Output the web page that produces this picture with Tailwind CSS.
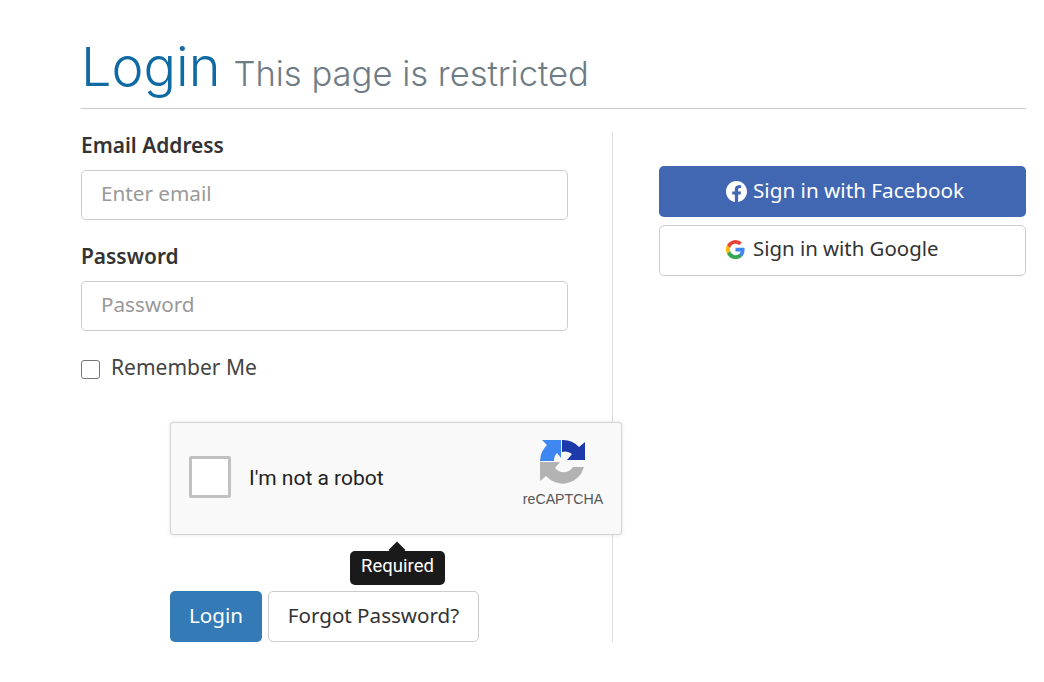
<!DOCTYPE html>
<html lang="en">
<head>
    <meta charset="UTF-8">
    <meta name="viewport" content="width=device-width, initial-scale=1.0">
    <title>Login</title>
    <script src="https://cdn.jsdelivr.net/npm/@tailwindcss/browser@4"></script>
</head>
<body class="bg-white h-[682px] overflow-hidden font-['Noto_Sans',sans-serif] text-[#333]">
    <div class="ml-[81px] w-[945px]">
        <div class="h-[109px] border-b border-[#ccc] flex items-baseline pt-[31px]">
            <h1 class="font-['Inter',sans-serif] font-light text-[54px] leading-[72px] text-[#0f6aa3]">Login</h1>
            <span class="font-['Inter',sans-serif] font-light text-[34.6px] ml-[13px] text-[#6f7b85]">This page is restricted</span>
        </div>
        <div class="flex mt-[23px]">
            <div class="w-[532px] h-[510px] border-r border-[#ddd] shrink-0">
                <label class="block font-semibold text-[20.9px] leading-[28px] mt-[-1px]">Email Address</label>
                <div class="mt-[11px] w-[487px] h-[50px] border border-[#ccc] rounded-[5px] px-[19px] pb-[2px] flex items-center text-[20.7px] text-[#999]">Enter email</div>
                <label class="block font-semibold text-[20.9px] leading-[28px] mt-[22px]">Password</label>
                <div class="mt-[11px] w-[487px] h-[50px] border border-[#ccc] rounded-[5px] px-[19px] pb-[2px] flex items-center text-[20.7px] text-[#999]">Password</div>
                <div class="flex items-center mt-[23px] h-[28px] text-[21px] text-[#444]">
                    <span class="w-[19px] h-[19px] border border-[#767676] rounded-[3px] mt-[2px]"></span>
                    <span class="ml-[11px]">Remember Me</span>
                </div>
                <div class="relative ml-[89px] mt-[40px] w-[452px] h-[113px] bg-[#f9f9f9] border border-[#d3d3d3] rounded-[3px] shadow-[0_0_4px_rgba(0,0,0,0.1)] flex items-center">
                    <span class="ml-[18px] w-[42px] h-[42px] bg-white border-[3px] border-[#c1c1c1] rounded-[2px] mt-[-3px]"></span>
                    <span class="ml-[18px] font-['Roboto',sans-serif] text-[21px] text-[#222]">I'm not a robot</span>
                    <div class="absolute left-[349px] top-[16px] w-[86px] flex flex-col items-center">
                        <svg width="46" height="46" viewBox="0 0 46 46">
                            <path d="M22 1 A22 22 0 0 1 39 8 L45 3 V21 H27 L32 15 A11 11 0 0 0 22 13 Z" fill="#1c3aa9"/>
                            <path d="M0 22 A23 23 0 0 1 7 6 L2 1 H21 V19 L17 14 A11 11 0 0 0 14 22 Z" fill="#3f87f0"/>
                            <path d="M0 23 V42 L6 37 A22 22 0 0 0 44 28 H33 A11 11 0 0 1 15 29 L20 23 Z" fill="#b3b3b3"/>
                        </svg>
                        <span class="font-['Liberation_Sans',sans-serif] text-[14.2px] leading-[16px] mt-[6px] text-[#555]">reCAPTCHA</span>
                    </div>
                    <div class="absolute left-[179px] top-[128px] w-[95px] h-[34px] bg-[#1a1a1a] rounded-[5px] pb-[2px] flex items-center justify-center font-['Roboto',sans-serif] text-[18.5px] text-white">Required</div>
                    <div class="absolute left-[220px] top-[121px] w-[12px] h-[12px] bg-[#1a1a1a] rotate-45"></div>
                </div>
                <div class="flex ml-[89px] mt-[56px] gap-[6px]">
                    <div class="w-[92px] h-[51px] bg-[#337ab7] rounded-[5px] pb-[3px] text-white text-[20.6px] flex items-center justify-center">Login</div>
                    <div class="w-[211px] h-[51px] border border-[#ccc] rounded-[5px] pb-[3px] text-[20.6px] flex items-center justify-center">Forgot Password?</div>
                </div>
            </div>
            <div class="ml-[46px] w-[367px] mt-[34px] flex flex-col gap-[8px]">
                <div class="h-[51px] bg-[#4267b2] rounded-[5px] pb-[2px] text-white text-[20.7px] flex items-center pl-[67px] gap-[6px]">
                    <svg class="mt-[1px]" width="21" height="21" viewBox="0 0 24 24" fill="#fff"><path d="M24 12.07C24 5.4 18.63 0 12 0S0 5.4 0 12.07c0 6.03 4.39 11.02 10.13 11.93v-8.44H7.08v-3.49h3.05V9.41c0-3.02 1.79-4.69 4.53-4.69 1.31 0 2.69.24 2.69.24v2.97h-1.51c-1.49 0-1.96.93-1.96 1.88v2.26h3.33l-.53 3.49h-2.8V24C19.61 23.09 24 18.1 24 12.07z"/></svg>
                    <span>Sign in with Facebook</span>
                </div>
                <div class="h-[51px] border border-[#ccc] rounded-[5px] pb-[4px] text-[20.4px] flex items-center pl-[66px] gap-[8px]">
                    <svg class="mt-[1px]" width="19" height="19" viewBox="0 0 24 24">
                        <path fill="#4285F4" d="M23.5 12.27c0-.85-.08-1.67-.22-2.45H12v4.64h6.45a5.5 5.5 0 0 1-2.39 3.61v3h3.87c2.26-2.09 3.57-5.17 3.57-8.8z"/>
                        <path fill="#34A853" d="M12 24c3.24 0 5.95-1.07 7.93-2.91l-3.87-3c-1.07.72-2.44 1.15-4.06 1.15-3.13 0-5.77-2.11-6.72-4.95h-4v3.1A12 12 0 0 0 12 24z"/>
                        <path fill="#FBBC05" d="M5.28 14.29a7.2 7.2 0 0 1 0-4.58v-3.1h-4a12 12 0 0 0 0 10.78z"/>
                        <path fill="#EA4335" d="M12 4.75c1.76 0 3.34.6 4.59 1.8l3.43-3.44A12 12 0 0 0 1.28 6.61l4 3.1C6.23 6.86 8.87 4.75 12 4.75z"/>
                    </svg>
                    <span>Sign in with Google</span>
                </div>
            </div>
        </div>
    </div>
</body>
</html>
